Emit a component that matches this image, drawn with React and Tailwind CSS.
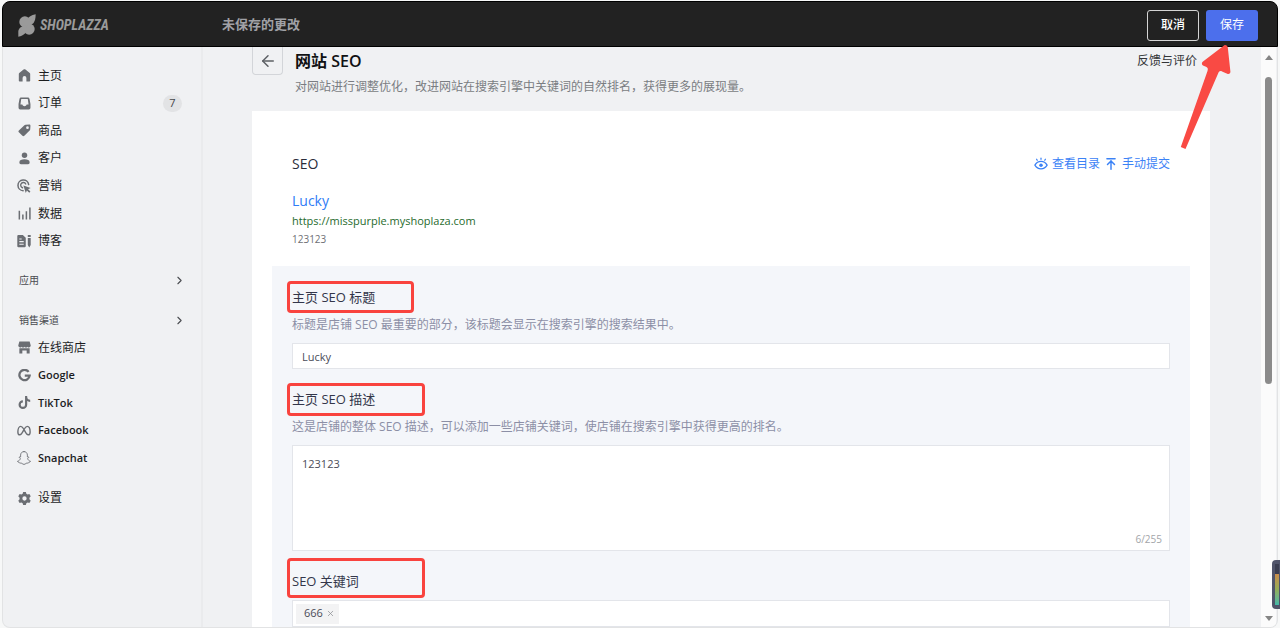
import React, { useState } from "react";
import { ArrowLeft, ArrowUpToLine, ChevronRight, X } from "lucide-react";

function Glyph({ children, viewBox = "0 0 24 24", className = "size-[13px]" }) {
  return (
    <svg viewBox={viewBox} className={className + " shrink-0"} fill="currentColor" aria-hidden="true">
      {children}
    </svg>
  );
}

const stroke = { fill: "none", stroke: "currentColor", strokeLinecap: "round", strokeLinejoin: "round" };

const HomeIcon = () => (
  <Glyph>
    <path d="M12 0.5c.6 0 1.2.2 1.7.6l8 6.4c.5.4.8 1 .8 1.700V21.500c0 .8-.7 1.500-1.500 1.500h-5.500V16.500a3.500 3.500 0 0 0-7 0V23H3c-.8 0-1.500-.7-1.500-1.500V9.200c0-.7.3-1.300.8-1.700l8-6.400c.5-.4 1.100-.6 1.700-.6z" />
  </Glyph>
);
const OrderIcon = () => (
  <Glyph>
    <path fillRule="evenodd" d="M6 1h12c2 0 3 1 3.400 3L23 13v7a3 3 0 0 1-3 3H4a3 3 0 0 1-3-3v-7L2.600 4C3 2 4 1 6 1zM6 3.500 4.500 14H8c.6 2 2 3 4 3s3.400-1 4-3h3.500L18 3.500z" />
  </Glyph>
);
const TagIcon = () => (
  <Glyph>
    <path fillRule="evenodd" d="M14 1.500 21 1c1 0 2 1 2 2l-.5 7c0 .8-.4 1.500-1 2.100l-9.800 9.800c-1 1-2.500 1-3.500 0l-6.600-6.600c-1-1-1-2.500 0-3.500L11.800 2.500c.6-.6 1.300-1 2.200-1zM17.500 4.200a2.500 2.500 0 1 0 0 5 2.500 2.500 0 0 0 0-5z" />
  </Glyph>
);
const CustomerIcon = () => (
  <Glyph>
    <circle cx="12" cy="6" r="5" />
    <path d="M2.500 19c0-4 4-5.500 9.500-5.500s9.500 1.500 9.500 5.500c0 2.500-1 3.500-3 3.500h-13c-2 0-3-1-3-3.500z" />
  </Glyph>
);
const MarketingIcon = () => (
  <Glyph className="size-[14px]">
    <path {...stroke} strokeWidth="2.6" d="M20 9.500A9.200 9.200 0 1 0 10.500 20" />
    <path {...stroke} strokeWidth="2.400" d="M15 8.500A4.600 4.600 0 1 0 9.500 15" />
    <path d="m11 11 12.500 4.500-4.500 2 4 4-2 2-4-4-2 4.500z" />
  </Glyph>
);
const DataIcon = () => (
  <Glyph>
    <path {...stroke} strokeLinecap="butt" strokeWidth="2.800" d="M2.500 7v16M9 14v9M15.500 8v15M22 1v22" />
  </Glyph>
);
const BlogIcon = () => (
  <Glyph className="size-[14px]">
    <path fillRule="evenodd" d="M2.500 1.500H10l5 5v14a2 2 0 0 1-2 2H2.500a2 2 0 0 1-2-2v-17c0-1.100.9-2 2-2zM4 7.500v2h4v-2zm0 4.500v2h7.500v-2zm0 4.500v2h7.500v-2z" />
    <path d="M18.500 1.500h5v3.500h-5zM18.500 7h5v12l-2.500 4-2.500-4z" />
  </Glyph>
);
const StoreIcon = () => (
  <Glyph>
    <path d="M2.500 1h19l2 7.500c0 2-1.500 3.500-3.300 3.500-1.300 0-2.300-.6-2.800-1.600-.6 1-1.500 1.600-2.700 1.600s-2.200-.6-2.700-1.600c-.5 1-1.500 1.600-2.700 1.600s-2.100-.6-2.700-1.600c-.5 1-1.500 1.600-2.800 1.600C2 12 .5 10.500.5 8.500z" />
    <path d="M2.500 13.500h19V23H16v-5.500H8V23H2.500z" />
  </Glyph>
);
const GoogleIcon = () => (
  <Glyph>
    <path {...stroke} strokeLinecap="butt" strokeLinejoin="miter" strokeWidth="4.200" d="M19.600 5.300A9.500 9.500 0 1 0 21.500 12.300H12.500" />
  </Glyph>
);
const TikTokIcon = () => (
  <Glyph>
    <path {...stroke} strokeLinecap="butt" strokeWidth="4" d="M22.500 9c-4 0-7.500-3-7.500-8v15a6 6 0 1 1-6-6" />
  </Glyph>
);
const MetaIcon = () => (
  <Glyph className="size-[14px]">
    <path {...stroke} strokeWidth="2.400" d="M12 9.500C10 5.500 8.500 4 6.500 4 3.500 4 1.500 8.500 1.500 13.500c0 3 1 5 3.300 5C8 18.500 10 13 12 9.500 14 5.500 15.500 4 17.500 4c3 0 5 4.500 5 9.500 0 3-1 5-3.300 5C16 18.500 14 13 12 9.500z" />
  </Glyph>
);
const SnapchatIcon = () => (
  <Glyph className="size-[14px]">
    <path {...stroke} strokeWidth="1.500" d="M12 1c3.500 0 5.800 2.500 5.800 6v3.200c.8.300 1.800-.7 2.400.2.500 1-1.500 1.700-2 2.400.6 2.500 2.500 4.200 5 4.900-.2 1.300-2 1.400-3 1.700-.3.600-.2 1.300-.8 1.400-1.200.1-2.500-.4-3.700.3-1.200.8-2.200 1.900-3.700 1.900s-2.500-1.100-3.700-1.900c-1.200-.7-2.500-.2-3.700-.3-.6-.1-.5-.8-.8-1.400-1-.3-2.800-.4-3-1.700 2.500-.7 4.400-2.400 5-4.900-.5-.7-2.500-1.400-2-2.400.6-.9 1.600.1 2.400-.2V7C6.200 3.500 8.500 1 12 1z" />
  </Glyph>
);
const GearIcon = () => (
  <Glyph>
    <path fillRule="evenodd" d="M9.500 0h5l.9 3.300 2.300 1.300 3.300-.9 2.500 4.300-2.400 2.500v3l2.400 2.500-2.500 4.300-3.300-.9-2.300 1.300-.9 3.300h-5l-.9-3.300-2.300-1.300-3.300.9L.5 16l2.400-2.500v-3L.5 8 3 3.700l3.300.9 2.300-1.300zM12 8a4 4 0 1 0 0 8 4 4 0 0 0 0-8z" />
  </Glyph>
);
const EyeIcon = () => (
  <Glyph className="size-[14px]">
    <path {...stroke} strokeWidth="2.200" d="M1.500 14C4 9.700 7.500 7.500 12 7.500s8 2.200 10.500 6.500c-2.500 4.300-6 6.500-10.500 6.500S4 18.300 1.500 14zM12 4V2M5.500 5.500l-1-1.700M18.500 5.500l1-1.700" />
    <circle cx="12" cy="14" r="3" />
  </Glyph>
);

const mainItems = [
  { label: "主页", icon: HomeIcon },
  { label: "订单", icon: OrderIcon, badge: 7 },
  { label: "商品", icon: TagIcon },
  { label: "客户", icon: CustomerIcon },
  { label: "营销", icon: MarketingIcon },
  { label: "数据", icon: DataIcon },
  { label: "博客", icon: BlogIcon },
];
const channelItems = [
  { label: "在线商店", icon: StoreIcon },
  { label: "Google", icon: GoogleIcon, brand: true },
  { label: "TikTok", icon: TikTokIcon, brand: true },
  { label: "Facebook", icon: MetaIcon, brand: true },
  { label: "Snapchat", icon: SnapchatIcon, brand: true },
];

function NavItem({ label, icon: Icon, badge, brand }) {
  return (
    <li className="flex">
      <a href="#" className="flex flex-1 items-center gap-[7px] text-[#1c1d1f]">
        <span className="flex w-[14px] justify-center text-[#6b6e73]">
          <Icon />
        </span>
        <span className={brand ? "text-[11px] font-semibold" : "text-xs"}>{label}</span>
        {badge && (
          <span className="mr-1 ml-auto flex h-[17px] w-[19px] items-center justify-center rounded-full bg-[#e2e3e5] text-[11px] text-[#45474b]">
            {badge}
          </span>
        )}
      </a>
    </li>
  );
}

function NavGroup({ label }) {
  return (
    <button type="button" className="flex h-5 w-full items-center justify-between pl-[2px] text-left text-[10px] text-[#4a4c50]">
      {label}
      <ChevronRight className="size-[13px] text-[#4a4c50]" />
    </button>
  );
}

function Logo() {
  return (
    <div className="flex items-center gap-1 text-[#9a9a9a]">
      <svg viewBox="0 0 55 70" className="h-[23px] w-[18px]" fill="currentColor" aria-hidden="true">
        <circle cx="21" cy="24" r="17" />
        <circle cx="34" cy="46" r="17" />
        <path d="M54 1C40 4 32 8 29 17v18c16 0 25-9 25-34z" />
        <path d="M1 69V52c2-9 9-16 24-17v18C21 62 14 66 1 69z" />
      </svg>
      <span className="font-['Liberation_Sans_Narrow','Roboto_Condensed','Open_Sans_Condensed','DejaVu_Sans_Condensed',sans-serif] text-sm font-bold italic">
        SHOPLAZZA
      </span>
    </div>
  );
}

function FieldLabel({ htmlFor, children, frame }) {
  return (
    <div className="relative flex h-5 items-center">
      <label htmlFor={htmlFor} className="text-[13px] text-[#33364a]">
        {children}
      </label>
      <span className={"pointer-events-none absolute rounded border-[3px] border-[#f9433e] " + frame} />
    </div>
  );
}

export default function App() {
  const [title, setTitle] = useState("Lucky");
  const [description, setDescription] = useState("123123");

  return (
    <div className="relative flex h-screen flex-col overflow-hidden bg-[#f7f8f8] pt-px pr-[2px] pl-[2px] font-['Open_Sans','Noto_Sans_CJK_SC',sans-serif]">
      <header className="flex h-[46px] shrink-0 items-center rounded-t-lg border border-black bg-[#222222] pt-[2px] pr-[19px] pl-[15px]">
        <div className="w-[204px]">
          <Logo />
        </div>
        <p className="text-[13px] font-bold text-[#a0a1a6]">未保存的更改</p>
        <div className="ml-auto flex gap-[7px]">
          <button type="button" className="h-[31px] w-[52px] rounded-[3px] border border-[#d5d5d5] text-xs font-medium text-white">
            取消
          </button>
          <button type="button" className="h-[31px] w-[52px] rounded-[3px] bg-[#4c6fec] text-xs text-white">
            保存
          </button>
        </div>
      </header>

      <div className="flex min-h-0 flex-1 overflow-hidden rounded-b-lg border-r border-b border-l border-[#e2e3e4] bg-[#f0f1f3]">
        <nav className="w-[200px] shrink-0 border-r-2 border-[#eaebed] pt-[15px] pr-[15px] pl-[14px]">
          <ul className="grid h-[193px] auto-rows-fr">
            {mainItems.map((item) => (
              <NavItem key={item.label} {...item} />
            ))}
          </ul>
          <div className="mt-[15px] flex flex-col gap-5">
            <NavGroup label="应用" />
            <NavGroup label="销售渠道" />
          </div>
          <ul className="mt-1 grid h-[138px] auto-rows-fr">
            {channelItems.map((item) => (
              <NavItem key={item.label} {...item} />
            ))}
          </ul>
          <ul className="mt-3 grid h-7 auto-rows-fr">
            <NavItem label="设置" icon={GearIcon} />
          </ul>
        </nav>

        <main className="min-w-0 flex-1 overflow-hidden pr-[51px] pl-[49px]">
          <div className="flex h-7 items-center">
            <button
              type="button"
              aria-label="返回"
              className="flex h-7 w-[31px] items-center justify-center rounded-b border border-t-0 border-[#d3d5d9] text-[#5e6166]"
            >
              <ArrowLeft className="size-[18px]" strokeWidth={2} />
            </button>
            <h1 className="ml-3 text-base font-bold text-[#111213]">
              网站 <span className="font-semibold">SEO</span>
            </h1>
            <a href="#" className="mr-[13px] ml-auto text-xs text-[#333538]">
              反馈与评价
            </a>
          </div>
          <p className="mt-[2px] ml-[43px] h-5 text-xs leading-5 text-[#7a7d82]">
            对网站进行调整优化，改进网站在搜索引擎中关键词的自然排名，获得更多的展现量。
          </p>

          <section className="mt-[14px] bg-white px-5 pt-[43px]">
            <div className="flex h-5 items-center justify-between px-5">
              <h2 className="text-sm text-[#2b2d3a]">SEO</h2>
              <div className="flex items-center gap-1 text-xs text-[#3b82f6]">
                <a href="#" className="flex items-center gap-1">
                  <EyeIcon />
                  查看目录
                </a>
                <a href="#" className="flex items-center gap-1">
                  <ArrowUpToLine className="size-[14px]" strokeWidth={2.5} />
                  手动提交
                </a>
              </div>
            </div>
            <div className="mt-[15px] px-5">
              <p className="h-6 text-sm leading-6 text-[#2f7cf6]">Lucky</p>
              <p className="h-4 text-[11px] leading-4 text-[#1f6b2d]">https://misspurple.myshoplaza.com</p>
              <p className="h-5 text-[10px] leading-5 text-[#6e7074]">123123</p>
            </div>

            <form className="mt-[17px] bg-[#f4f6fa] px-5 pt-[22px]" onSubmit={(e) => e.preventDefault()}>
              <FieldLabel htmlFor="seo-title" frame="-top-[7px] -left-[5px] h-8 w-[127px]">
                主页 SEO 标题
              </FieldLabel>
              <p className="mt-[7px] h-5 text-xs leading-5 text-[#8c8fa6]">
                标题是店铺 SEO 最重要的部分，该标题会显示在搜索引擎的搜索结果中。
              </p>
              <input
                id="seo-title"
                value={title}
                onChange={(e) => setTitle(e.target.value)}
                className="mt-2 block h-[26px] w-full border border-[#e3e5ea] bg-white px-[9px] text-[11px] text-[#4a4c58] outline-none"
              />

              <div className="mt-[21px]">
                <FieldLabel htmlFor="seo-description" frame="-top-[7px] -left-[5px] h-[33px] w-[138px]">
                  主页 SEO 描述
                </FieldLabel>
              </div>
              <p className="mt-[7px] h-5 text-xs leading-5 text-[#8c8fa6]">
                这是店铺的整体 SEO 描述，可以添加一些店铺关键词，使店铺在搜索引擎中获得更高的排名。
              </p>
              <div className="relative mt-2">
                <textarea
                  id="seo-description"
                  value={description}
                  onChange={(e) => setDescription(e.target.value)}
                  maxLength={255}
                  className="block h-[106px] w-full resize-none border border-[#e3e5ea] bg-white px-[9px] py-2 text-[11px] leading-5 text-[#4a4c58] outline-none"
                />
                <span className="absolute right-2 bottom-1 text-[10px] leading-4 text-[#a3a5a9]">{description.length}/255</span>
              </div>

              <div className="mt-[21px]">
                <FieldLabel htmlFor="seo-keywords" frame="-top-[14px] -left-[5px] h-10 w-[138px]">
                  SEO 关键词
                </FieldLabel>
              </div>
              <div className="mt-2 flex h-[27px] items-center gap-2 border border-[#e3e5ea] bg-white px-[3px]">
                <span className="flex h-5 items-center gap-[3px] bg-[#f3f3f4] pr-1 pl-2 text-[11px] text-[#4a4c58]">
                  666
                  <button type="button" aria-label="删除 666">
                    <X className="size-[9px] text-[#8e9096]" />
                  </button>
                </span>
                <input id="seo-keywords" className="min-w-0 flex-1 text-[11px] outline-none" />
              </div>
            </form>
          </section>
        </main>

        <div className="mr-px flex w-[15px] shrink-0 flex-col items-center bg-[#fbfbfb] pt-2 pb-[6px]" aria-hidden="true">
          <svg viewBox="0 0 8 5" className="h-[5px] w-2" fill="#858585">
            <path d="M4 0 8 5H0z" />
          </svg>
          <div className="mt-[17px] flex flex-1 flex-col">
            <div className="h-[57%] w-[7px] rounded-full bg-[#8b8b8b]" />
          </div>
          <svg viewBox="0 0 8 5" className="h-[5px] w-2" fill="#858585">
            <path d="M4 5 0 0h8z" />
          </svg>
        </div>
      </div>

      <svg
        viewBox="0 0 52 108"
        className="pointer-events-none absolute top-[44px] right-[49px] h-[108px] w-[52px]"
        fill="#f94a44"
        aria-hidden="true"
      >
        <path d="M45 1.500c1.500-1 3.500 0 3.800 2l2.600 24c.2 2-1.500 3-3.200 2.200l-5.200-2.300c-2-.8-3 0-3.800 1.800L6.500 105 1.800 103 28.500 27c.7-2.300.3-3.400-1.500-4.200l-2.500-1c-2-.8-2.200-3-.5-4.200z" />
      </svg>

      <div className="absolute right-0 bottom-[19px] flex h-[49px] w-2 flex-col justify-end rounded-l bg-[#50546a] p-1 pr-px pl-[3px]" aria-hidden="true">
        <div className="h-[10px] bg-[#3a3d50]" />
        <div className="h-[31px] bg-linear-to-b from-[#c98b4a] via-[#93ad58] to-[#3fb8a8]" />
      </div>
    </div>
  );
}
